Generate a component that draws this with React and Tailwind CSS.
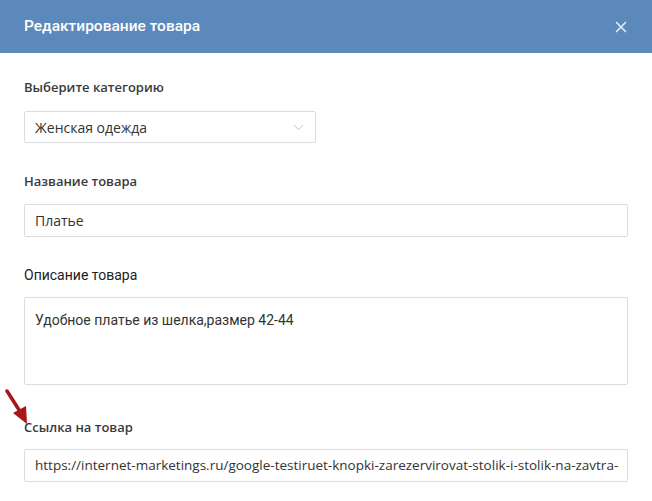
import React from 'react'
import { X, ChevronDown } from 'lucide-react'

function Label({ children, roboto }) {
    return (
        <p
            className={`leading-none ${roboto ? "text-[14px] text-[#222] font-['Roboto'] font-normal" : "text-[13px] text-[#3a3a3a] font-['Open_Sans'] font-semibold"}`}
        >
            {children}
        </p>
    )
}

export default function App() {
    return (
        <div className="w-[652px] h-[501px] bg-white overflow-hidden font-['Open_Sans',sans-serif]">

            {/* HEADER */}
            <div className="h-[53px] bg-[#5b89bc] flex items-center justify-between pl-6 pr-[22px]">
                <h1 className="text-white text-[15.5px] font-['Roboto'] font-medium">
                    Редактирование товара
                </h1>
                <X size={18} strokeWidth={2.2} className="text-[#e3ebf5]" />
            </div>

            {/* FORM */}
            <div className="relative px-6 pt-[28px]">

                <Label>Выберите категорию</Label>
                <div className="mt-[17px] w-[292px] h-[32px] border border-[#dcdcdc] rounded-[2px] flex items-center justify-between pl-[10px] pr-[8px]">
                    <span className="text-[14px] text-[#333]">Женская одежда</span>
                    <ChevronDown size={17} strokeWidth={1.3} className="text-[#bdbdbd]" />
                </div>

                <div className="mt-[32px]">
                    <Label>Название товара</Label>
                </div>
                <div className="mt-[16px] h-[33px] border border-[#dcdcdc] rounded-[2px] flex items-center pl-[10px]">
                    <span className="text-[14px] text-[#333]">Платье</span>
                </div>

                <div className="mt-[31px]">
                    <Label roboto>Описание товара</Label>
                </div>
                <div className="mt-[15px] h-[88px] border border-[#dcdcdc] rounded-[2px] pl-[10px] pt-[9px]">
                    <span className="text-[14px] text-[#333] font-['Roboto']">Удобное платье из шелка,размер 42-44</span>
                </div>

                <div className="mt-[36px]">
                    <Label>Ссылка на товар</Label>
                </div>
                <div className="mt-[15px] h-[33px] border border-[#dcdcdc] rounded-[2px] flex items-center pl-[10px] pr-[8px] overflow-hidden whitespace-nowrap">
                    <span className="text-[13.5px] text-[#333] overflow-hidden">https://internet-marketings.ru/google-testiruet-knopki-zarezervirovat-stolik-i-stolik-na-zavtra-chto-eto</span>
                </div>

                {/* red arrow */}
                <svg className="absolute left-[4px] top-[336px]" width="28" height="38" viewBox="0 0 28 38">
                    <line x1="3" y1="2" x2="17" y2="24" stroke="#a8161a" strokeWidth="3.5" strokeLinecap="round" />
                    <polygon points="9,24 23,35 22,17" fill="#a8161a" />
                </svg>
            </div>
        </div>
    )
}
